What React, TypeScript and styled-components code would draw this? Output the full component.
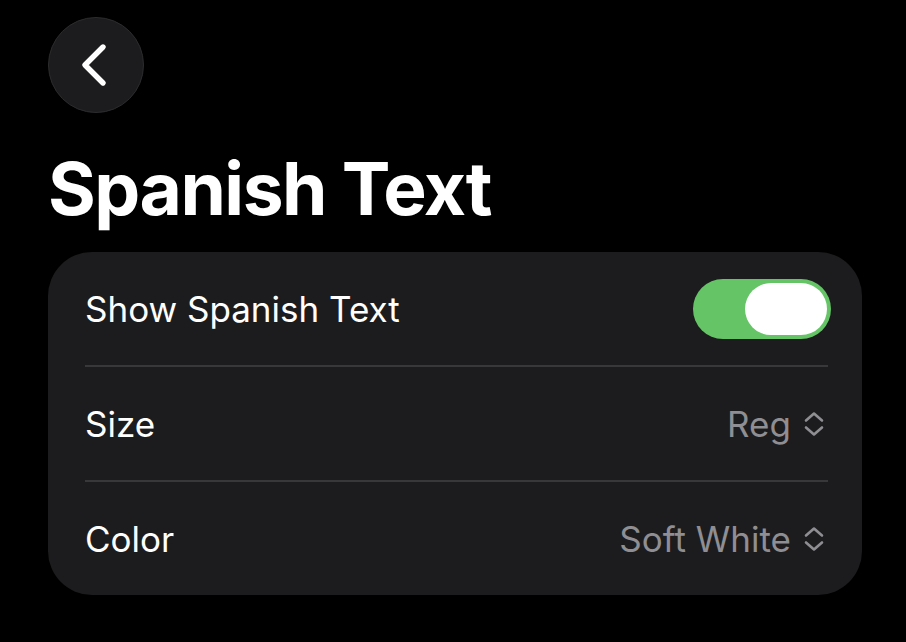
import styled, { createGlobalStyle } from "styled-components";

const GlobalStyle = createGlobalStyle`
  html, body {
    margin: 0;
    padding: 0;
    background: #000;
  }
  body {
    font-family: Inter, "Noto Sans", sans-serif;
    -webkit-font-smoothing: antialiased;
  }
`;

const Page = styled.div`
  width: 906px;
  height: 642px;
  box-sizing: border-box;
  padding: 17px 44px 0 48px;
  background: #000;
  color: #fff;
  display: flex;
  flex-direction: column;
  align-items: flex-start;
`;

const BackButton = styled.button`
  width: 96px;
  height: 96px;
  border-radius: 50%;
  background: #1c1c1e;
  border: 1.5px solid #2c2c2e;
  display: flex;
  align-items: center;
  justify-content: center;
  padding: 0;
  cursor: pointer;
`;

const Title = styled.h1`
  margin: 32px 0 0 0;
  font-size: 73px;
  line-height: 88px;
  font-weight: 700;
  letter-spacing: -1.5px;
`;

const Card = styled.div`
  margin-top: 19px;
  width: 100%;
  background: #1c1c1e;
  border-radius: 44px;
  padding: 0 34px 0 37px;
  box-sizing: border-box;
`;

const Row = styled.div<{ $last?: boolean }>`
  height: 113px;
  display: flex;
  align-items: center;
  justify-content: space-between;
  border-bottom: ${p => (p.$last ? "none" : "2px solid #38383a")};
`;

const Label = styled.span`
  font-size: 35px;
  font-weight: 400;
  color: #fff;
`;

const Value = styled.span`
  display: flex;
  align-items: center;
  gap: 12px;
  font-size: 35px;
  color: #8e8e93;
  margin-right: 3px;
`;

const Toggle = styled.div<{ $on: boolean }>`
  width: 138px;
  height: 60px;
  border-radius: 30px;
  background: ${p => (p.$on ? "#65c466" : "#39393d")};
  display: flex;
  align-items: center;
  justify-content: ${p => (p.$on ? "flex-end" : "flex-start")};
  padding: 0 4px;
  box-sizing: border-box;
  margin-right: -3px;
`;

const Knob = styled.div`
  width: 82px;
  height: 52px;
  border-radius: 26px;
  background: #fff;
`;

const UpDown = () => (
  <svg width="22" height="26" viewBox="0 0 22 26" fill="none">
    <path
      d="M3 9.5 L11 2.5 L19 9.5 M3 16.5 L11 23.5 L19 16.5"
      stroke="#8e8e93"
      strokeWidth="2.6"
      strokeLinecap="round"
      strokeLinejoin="round"
    />
  </svg>
);

export default function App() {
  return (
    <>
      <GlobalStyle />
      <Page>
        <BackButton aria-label="Back">
          <svg width="40" height="44" viewBox="0 0 40 44" fill="none">
            <path
              d="M27 4 L9 22 L27 40"
              stroke="#fff"
              strokeWidth="5.4"
              strokeLinecap="round"
              strokeLinejoin="round"
            />
          </svg>
        </BackButton>
        <Title>Spanish Text</Title>
        <Card>
          <Row>
            <Label>Show Spanish Text</Label>
            <Toggle $on>
              <Knob />
            </Toggle>
          </Row>
          <Row>
            <Label>Size</Label>
            <Value>
              Reg
              <UpDown />
            </Value>
          </Row>
          <Row $last>
            <Label>Color</Label>
            <Value>
              Soft White
              <UpDown />
            </Value>
          </Row>
        </Card>
      </Page>
    </>
  );
}
